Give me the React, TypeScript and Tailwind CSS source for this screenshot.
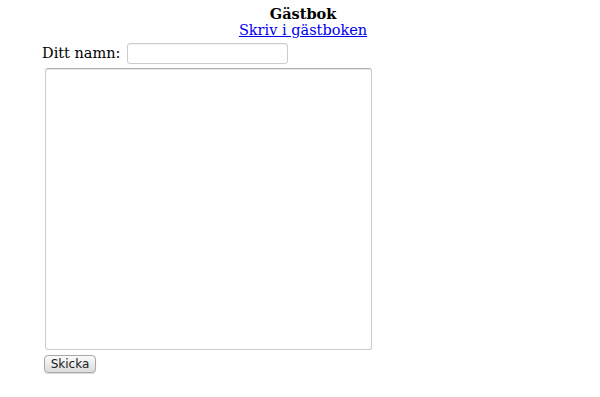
export default function App() {
  return (
    <div className="min-h-[397px] w-[600px] bg-white text-[14.5px] leading-[17px] text-black [font-family:'DejaVu_Serif',serif]">
      {/* Header */}
      <div className="flex flex-col items-center pt-[5px] pl-[6px]">
        <h1 className="text-[14.5px] font-bold leading-[17px]">Gästbok</h1>
        <a href="#" className="text-[#0000ee] underline">
          Skriv i gästboken
        </a>
      </div>

      {/* Form */}
      <form className="mt-[4px] pl-[42px]" onSubmit={(e) => e.preventDefault()}>
        <div className="flex items-center gap-[7px]">
          <label htmlFor="namn">Ditt namn:</label>
          <input
            id="namn"
            type="text"
            className="h-[21px] w-[161px] rounded-[3px] border border-[#cccccc] bg-white shadow-[inset_0_1px_1px_rgba(0,0,0,0.06)]"
          />
        </div>
        <textarea
          className="mt-[4px] ml-[3px] block h-[282px] w-[327px] resize-none rounded-[3px] border border-[#cccccc] border-t-[#b0b0b0] bg-white shadow-[inset_0_1px_1px_rgba(0,0,0,0.1)]"
        />
        <button
          type="submit"
          className="mt-[5px] ml-[2px] h-[18px] w-[52px] rounded-[4px] border border-[#a8a8a8] bg-gradient-to-b from-[#fbfbfb] to-[#dcdcdc] text-[12px] leading-[16px] text-[#1a1a1a] shadow-[0_1px_1px_rgba(0,0,0,0.15)] [font-family:'DejaVu_Sans',sans-serif]"
        >
          Skicka
        </button>
      </form>
    </div>
  );
}
